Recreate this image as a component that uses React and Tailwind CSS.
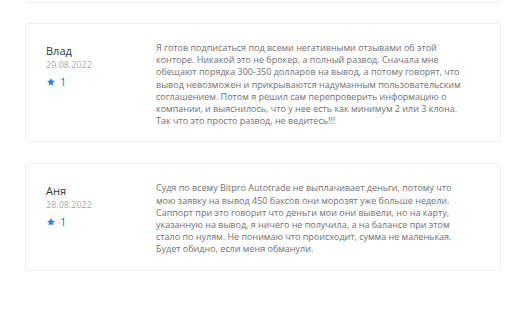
import React from "react";

const reviews = [
  {
    name: "Влад",
    date: "29.08.2022",
    rating: 1,
    text:
      "Я готов подписаться под всеми негативными отзывами об этой конторе. Никакой это не брокер, а полный развод. Сначала мне обещают порядка 300-350 долларов на вывод, а потому говорят, что вывод невозможен и прикрываются надуманным пользовательским соглашением. Потом я решил сам перепроверить информацию о компании, и выяснилось, что у нее есть как минимум 2 или 3 клона. Так что это просто развод, не ведитесь!!!",
  },
  {
    name: "Аня",
    date: "28.08.2022",
    rating: 1,
    text:
      "Судя по всему Bitpro Autotrade не выплачивает деньги, потому что мою заявку на вывод 450 баксов они морозят уже больше недели. Саппорт при это говорит что деньги мои они вывели, но на карту, указанную на вывод, я ничего не получила, а на балансе при этом стало по нулям. Не понимаю что происходит, сумма не маленькая. Будет обидно, если меня обманули.",
  },
];

const Star = () => (
  <svg width="10" height="10" viewBox="0 0 24 24" className="fill-[#2f86d4]">
    <path d="M12 2.5l2.9 6.1 6.6.8-4.9 4.6 1.3 6.6L12 17.3l-5.9 3.3 1.3-6.6-4.9-4.6 6.6-.8z" />
  </svg>
);

const ReviewCard = ({ review }) => {
  return (
    <div className="flex border border-[#efefef] rounded-[3px] bg-white pl-5 pr-6 pt-[18px] pb-[14px]">
      <div className="w-[110px] shrink-0 pt-[2px]">
        <div className="text-[11px] leading-[14px] text-[#333]">{review.name}</div>
        <div className="text-[9px] leading-[12px] text-[#aaa] mt-[1px]">{review.date}</div>
        <div className="flex items-center gap-[4px] mt-[4px]">
          <Star />
          <span className="text-[11px] leading-[14px] text-[#2f6fa8]">{review.rating}</span>
        </div>
      </div>
      <p className="w-[312px] text-[9px] leading-[12.2px] text-[#707070]">{review.text}</p>
    </div>
  );
};

const App = () => {
  return (
    <div className="w-[512px] h-[315px] bg-white overflow-hidden font-['Open_Sans',sans-serif]">
      <div className="ml-[25px] mr-[11px] -mt-[20px] h-[23px] border border-[#efefef] rounded-[3px]" />
      <div className="ml-[25px] mr-[11px] mt-[20px] flex flex-col gap-[21px]">
        {reviews.map((r) => (
          <ReviewCard key={r.name} review={r} />
        ))}
      </div>
    </div>
  );
};

export default App;
